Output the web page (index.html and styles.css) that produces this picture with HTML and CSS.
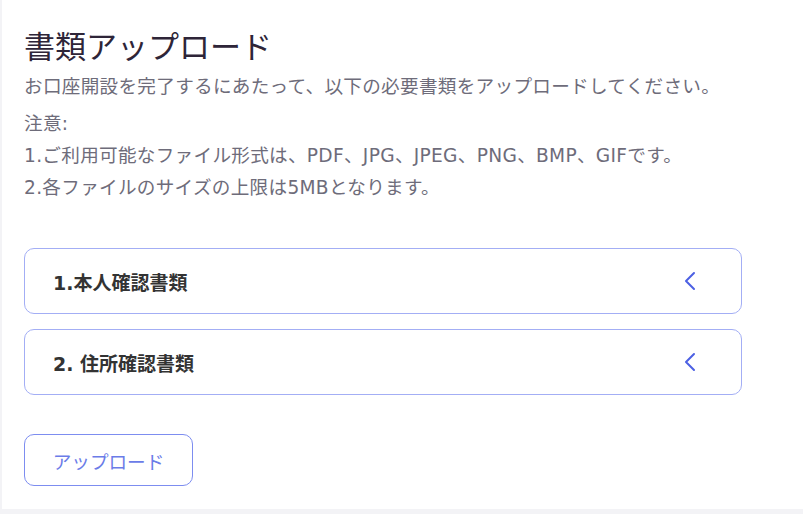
FILE: index.html
```html
<!DOCTYPE html>
<html lang="ja">
<head>
<meta charset="utf-8">
<link rel="stylesheet" href="styles.css">
</head>
<body>
<main class="panel">
  <h1 class="title">書類アップロード</h1>
  <p class="lead">お口座開設を完了するにあたって、以下の必要書類をアップロードしてください。</p>
  <div class="notes">
    <p>注意:</p>
    <p>1.ご利用可能なファイル形式は、PDF、JPG、JPEG、PNG、BMP、GIFです。</p>
    <p>2.各ファイルのサイズの上限は5MBとなります。</p>
  </div>
  <div class="sections">
    <div class="section">
      <span class="section-title">1.本人確認書類</span>
      <svg class="chev" viewBox="0 0 12 20" width="12" height="20"><path d="M10 2 L2 10 L10 18" fill="none" stroke="currentColor" stroke-width="2" stroke-linecap="round" stroke-linejoin="round"/></svg>
    </div>
    <div class="section">
      <span class="section-title">2. 住所確認書類</span>
      <svg class="chev" viewBox="0 0 12 20" width="12" height="20"><path d="M10 2 L2 10 L10 18" fill="none" stroke="currentColor" stroke-width="2" stroke-linecap="round" stroke-linejoin="round"/></svg>
    </div>
  </div>
  <button class="upload">アップロード</button>
</main>
</body>
</html>
```

FILE: styles.css
```css
html, body {
  margin: 0;
  padding: 0;
}
body {
  background: #f3f3f6;
  font-family: "DejaVu Sans", "Noto Sans CJK JP", sans-serif;
}
.panel {
  margin-left: 2px;
  height: 509px;
  background: #ffffff;
  padding: 24px 0 0 22px;
  box-sizing: border-box;
}
.title {
  margin: 0;
  font-family: "Noto Sans CJK JP", sans-serif;
  font-size: 31px;
  line-height: 42px;
  font-weight: 400;
  color: #2e2538;
}
.lead {
  margin: 5px 0 0;
  font-size: 18.6px;
  line-height: 32px;
  letter-spacing: 0.3px;
  color: #6e6c7a;
}
.notes {
  margin-top: 5px;
  font-size: 18.6px;
  line-height: 32px;
  letter-spacing: 0.3px;
  color: #6e6c7a;
}
.notes p {
  margin: 0;
}
.sections {
  margin-top: 44px;
  width: 718px;
  display: flex;
  flex-direction: column;
  gap: 15px;
}
.section {
  height: 66px;
  box-sizing: border-box;
  border: 1px solid #a3aef5;
  border-radius: 10px;
  display: flex;
  align-items: center;
  justify-content: space-between;
  padding: 0 45px 0 28px;
}
.section-title {
  font-size: 19px;
  font-weight: 700;
  color: #333333;
}
.chev {
  color: #4c60e3;
}
.upload {
  margin-top: 39px;
  width: 169px;
  height: 52px;
  background: #ffffff;
  border: 1px solid #7d8df0;
  border-radius: 10px;
  font-family: "Noto Sans CJK JP", sans-serif;
  font-size: 18.6px;
  color: #6b7ce8;
  padding: 0;
}
```
